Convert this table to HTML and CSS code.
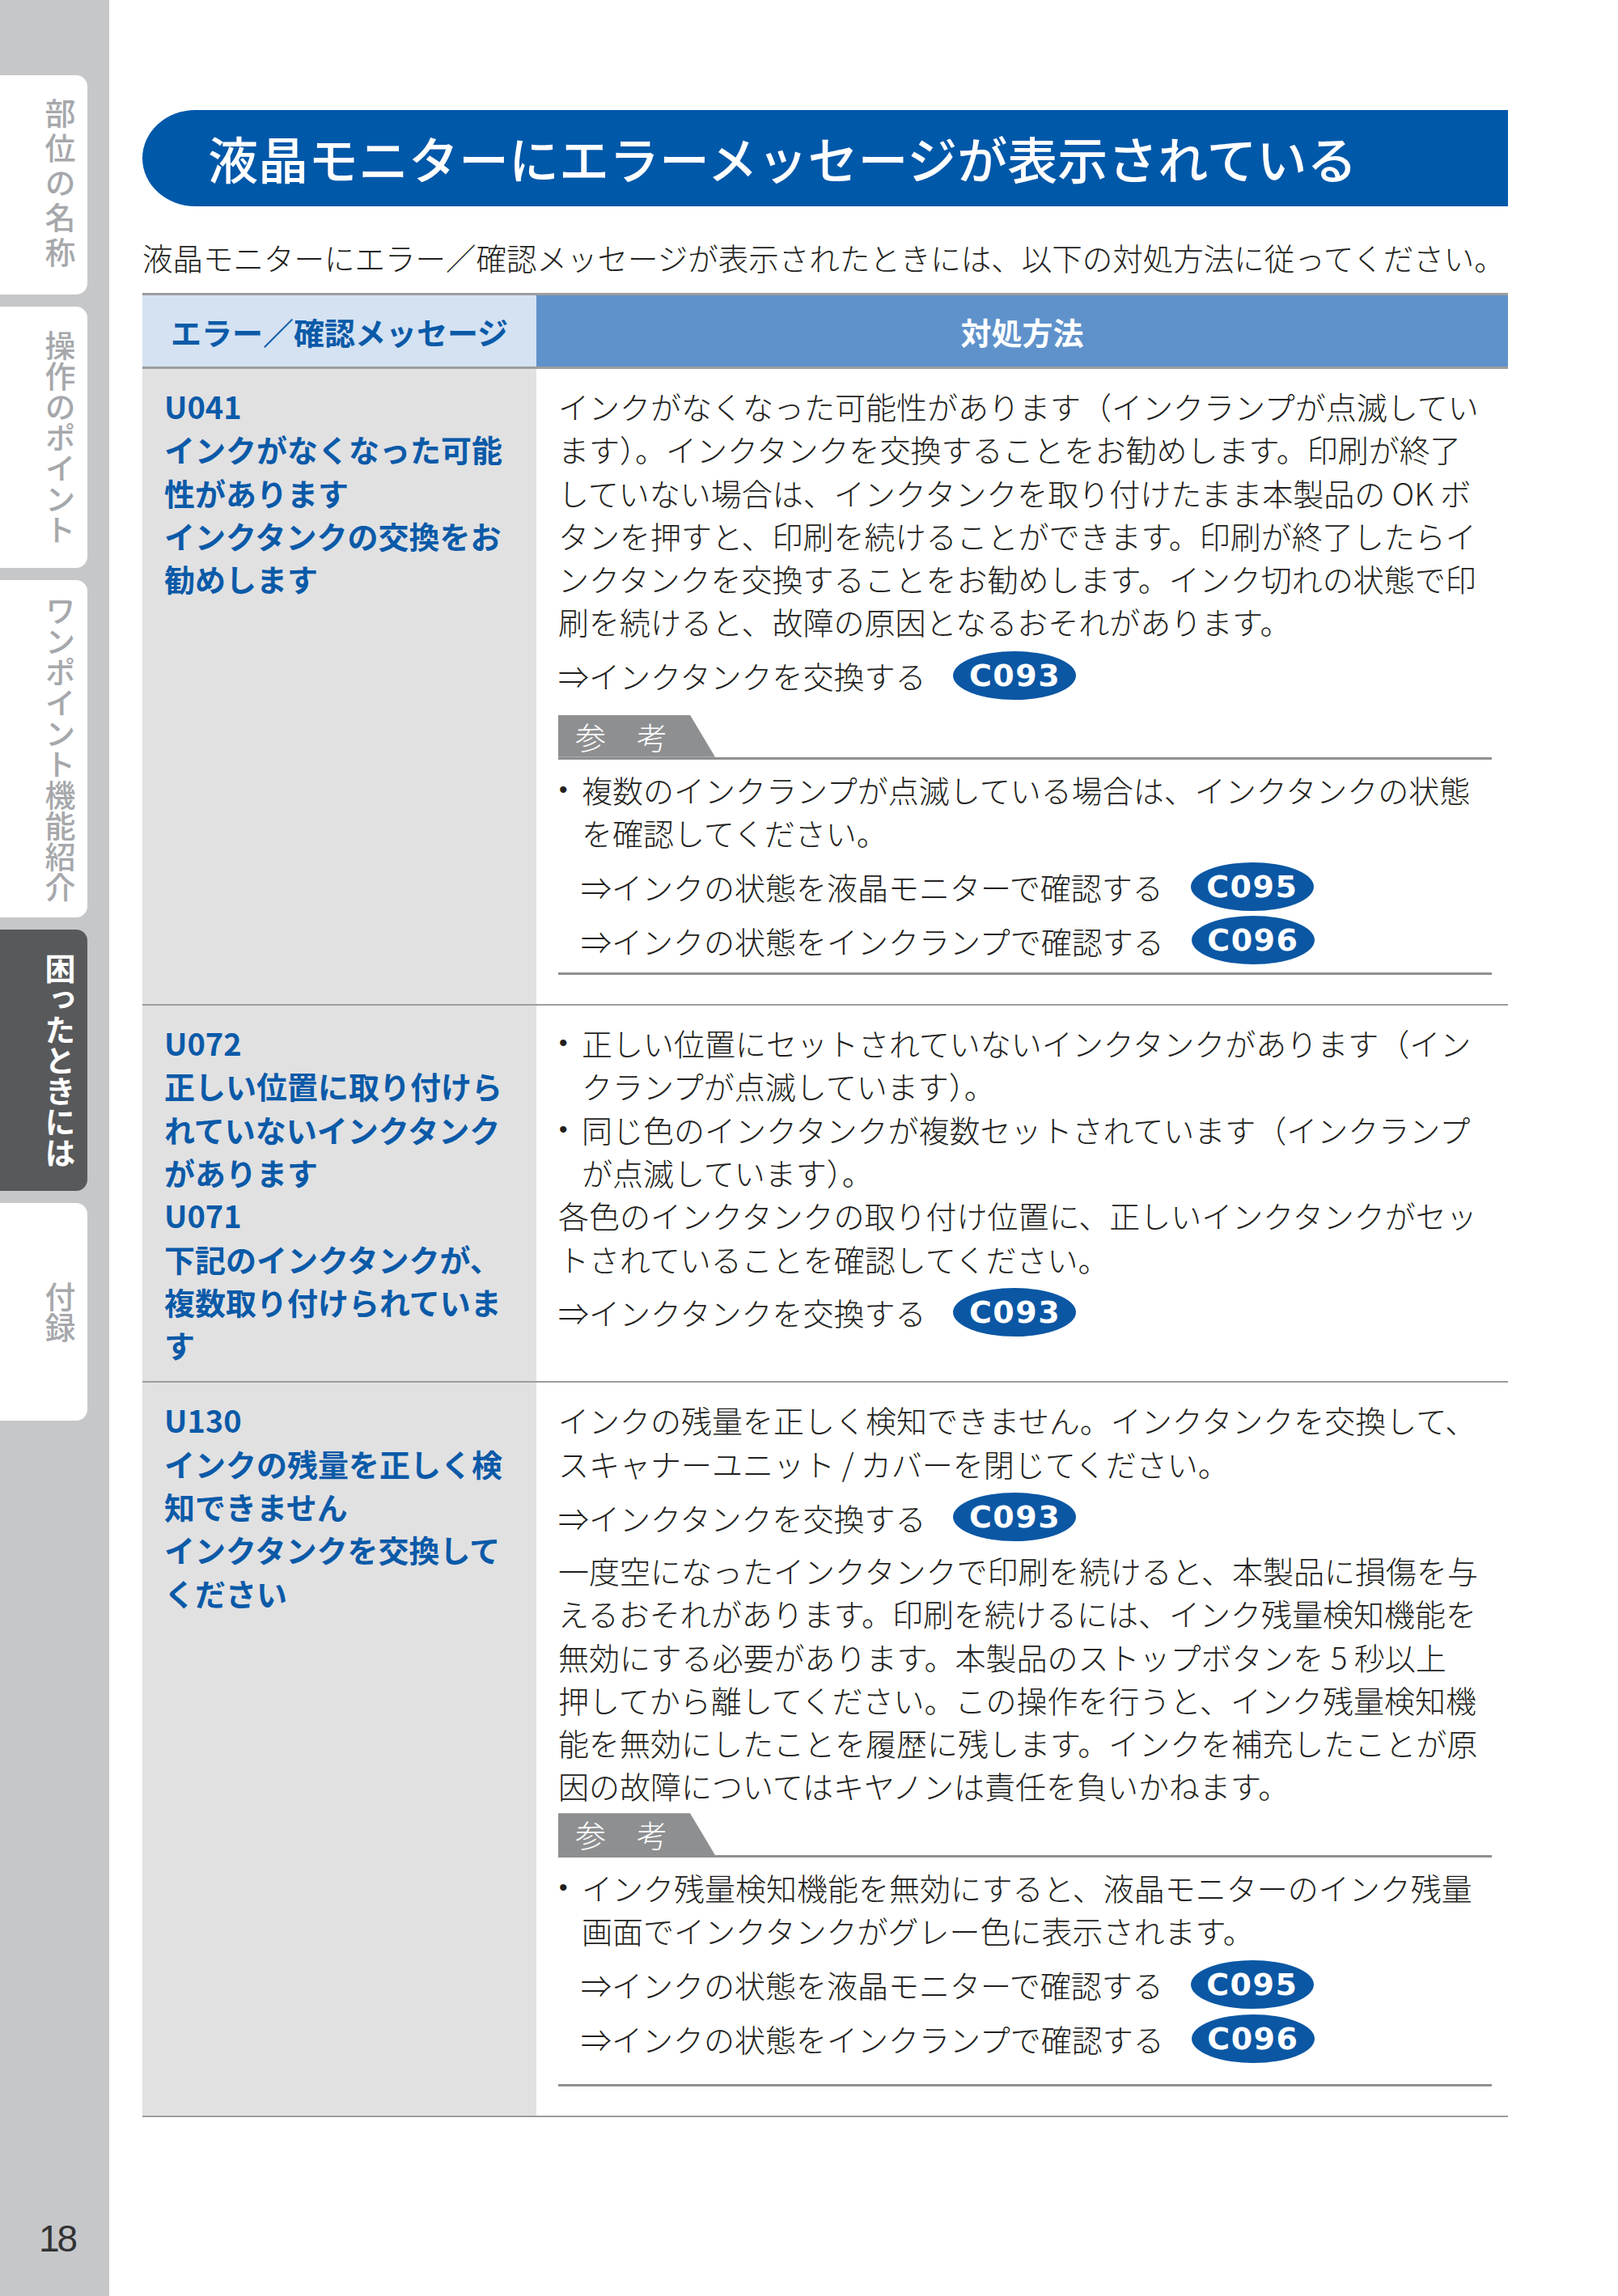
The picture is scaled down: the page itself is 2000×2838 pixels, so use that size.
FILE: index.html
```html
<!DOCTYPE html>
<html lang="ja">
<head>
<meta charset="utf-8">
<title>液晶モニターにエラーメッセージが表示されている</title>
<link rel="stylesheet" href="styles.css">
</head>
<body>
<div class="page">
  <aside class="sidebar">
    <nav class="tabs">
      <div class="tab tab-1"><span>部位の名称</span></div>
      <div class="tab tab-2"><span>操作のポイント</span></div>
      <div class="tab tab-3"><span>ワンポイント機能紹介</span></div>
      <div class="tab tab-4"><span>困ったときには</span></div>
      <div class="tab tab-5"><span>付録</span></div>
    </nav>
    <div class="pageno">18</div>
  </aside>

  <main class="main">
    <h1 class="title">液晶モニターにエラーメッセージが表示されている</h1>
    <p class="lead">液晶モニターにエラー／確認メッセージが表示されたときには、以下の対処方法に従ってください。</p>

    <div class="table">
      <div class="thead">
        <div class="th th-msg">エラー／確認メッセージ</div>
        <div class="th th-act">対処方法</div>
      </div>

      <div class="row">
        <div class="cell msg">U041<br>インクがなくなった可能<br>性があります<br>インクタンクの交換をお<br>勧めします</div>
        <div class="cell act">
          <p class="body">インクがなくなった可能性があります（インクランプが点滅してい<br>ます）。インクタンクを交換することをお勧めします。印刷が終了<br>していない場合は、インクタンクを取り付けたまま本製品の OK ボ<br>タンを押すと、印刷を続けることができます。印刷が終了したらイ<br>ンクタンクを交換することをお勧めします。インク切れの状態で印<br>刷を続けると、故障の原因となるおそれがあります。</p>
          <div class="ref"><span>⇒インクタンクを交換する</span><span class="badge">C093</span></div>
          <div class="note">
            <div class="note-head"><span class="note-label">参　考</span></div>
            <ul class="bullets">
              <li><span>複数のインクランプが点滅している場合は、インクタンクの状態<br>を確認してください。</span></li>
            </ul>
            <div class="ref"><span>⇒インクの状態を液晶モニターで確認する</span><span class="badge">C095</span></div>
            <div class="ref"><span>⇒インクの状態をインクランプで確認する</span><span class="badge">C096</span></div>
          </div>
        </div>
      </div>

      <div class="row">
        <div class="cell msg">U072<br>正しい位置に取り付けら<br>れていないインクタンク<br>があります<br>U071<br>下記のインクタンクが、<br>複数取り付けられていま<br>す</div>
        <div class="cell act">
          <ul class="bullets first">
            <li><span>正しい位置にセットされていないインクタンクがあります（イン<br>クランプが点滅しています）。</span></li>
            <li><span>同じ色のインクタンクが複数セットされています（インクランプ<br>が点滅しています）。</span></li>
          </ul>
          <p class="body">各色のインクタンクの取り付け位置に、正しいインクタンクがセッ<br>トされていることを確認してください。</p>
          <div class="ref"><span>⇒インクタンクを交換する</span><span class="badge">C093</span></div>
        </div>
      </div>

      <div class="row">
        <div class="cell msg">U130<br>インクの残量を正しく検<br>知できません<br>インクタンクを交換して<br>ください</div>
        <div class="cell act">
          <p class="body">インクの残量を正しく検知できません。インクタンクを交換して、<br>スキャナーユニット / カバーを閉じてください。</p>
          <div class="ref"><span>⇒インクタンクを交換する</span><span class="badge">C093</span></div>
          <p class="body">一度空になったインクタンクで印刷を続けると、本製品に損傷を与<br>えるおそれがあります。印刷を続けるには、インク残量検知機能を<br>無効にする必要があります。本製品のストップボタンを 5 秒以上<br>押してから離してください。この操作を行うと、インク残量検知機<br>能を無効にしたことを履歴に残します。インクを補充したことが原<br>因の故障についてはキヤノンは責任を負いかねます。</p>
          <div class="note note-wide">
            <div class="note-head"><span class="note-label">参　考</span></div>
            <ul class="bullets">
              <li><span>インク残量検知機能を無効にすると、液晶モニターのインク残量<br>画面でインクタンクがグレー色に表示されます。</span></li>
            </ul>
            <div class="ref"><span>⇒インクの状態を液晶モニターで確認する</span><span class="badge">C095</span></div>
            <div class="ref"><span>⇒インクの状態をインクランプで確認する</span><span class="badge">C096</span></div>
          </div>
        </div>
      </div>
    </div>
  </main>
</div>
</body>
</html>
```

FILE: styles.css
```css
* {
  box-sizing: border-box;
  margin: 0;
  padding: 0;
}

html, body {
  width: 2000px;
  background: #ffffff;
}

body {
  font-family: "Noto Sans CJK JP", "Noto Sans", sans-serif;
  color: #231f20;
}

.page {
  display: flex;
  width: 2000px;
  min-height: 2838px;
}

/* ---------- sidebar ---------- */
.sidebar {
  width: 135px;
  flex: none;
  background: #c6c7c9;
  display: flex;
  flex-direction: column;
}

.tabs {
  display: flex;
  flex-direction: column;
  gap: 15px;
  padding-top: 93px;
}

.tab {
  width: 108px;
  background: #ffffff;
  border-radius: 0 14px 14px 0;
  display: flex;
  align-items: center;
  justify-content: flex-end;
  padding-right: 15px;
}

.tab span {
  writing-mode: vertical-rl;
  font-size: 38px;
  line-height: 38px;
  color: #a6a8ab;
  font-weight: 500;
}

.tab-1 { height: 271px; }
.tab-1 span { letter-spacing: 5px; }
.tab-2 { height: 323px; }
.tab-3 { height: 417px; }
.tab-4 { height: 323px; background: #58595b; }
.tab-4 span { color: #ffffff; font-weight: 700; }
.tab-5 { height: 269px; }

.pageno {
  margin-top: auto;
  padding: 0 0 48px 48px;
  font-family: "Liberation Sans", Arial, sans-serif;
  font-size: 46px;
  line-height: 46px;
  letter-spacing: -3px;
  color: #333333;
}

/* ---------- main ---------- */
.main {
  width: 1688px;
  margin-left: 41px;
  padding-top: 136px;
}

.title {
  height: 119px;
  background: #0058a9;
  color: #ffffff;
  border-radius: 66px 0 0 66px / 60px 0 0 60px;
  font-size: 62px;
  font-weight: 500;
  line-height: 119px;
  padding-left: 81px;
  white-space: nowrap;
}

.lead {
  margin-top: 36px;
  font-size: 37.5px;
  font-weight: 300;
  line-height: 53px;
  white-space: nowrap;
}

.table {
  margin-top: 18px;
}

.thead {
  display: grid;
  grid-template-columns: 487px 1201px;
  height: 94px;
  border-top: 3px solid #9d9d9d;
  border-bottom: 3px solid #9d9d9d;
}

.th {
  display: flex;
  align-items: center;
  justify-content: center;
  font-size: 38px;
  font-weight: 700;
}

.th-msg { background: #d4e2f2; color: #0b5aa8; }
.th-act { background: #5f92cb; color: #ffffff; }

.row {
  display: grid;
  grid-template-columns: 487px 1201px;
  border-bottom: 2px solid #9d9d9d;
}

.cell {
  padding-top: 19px;
  padding-bottom: 19px;
  font-size: 38px;
  line-height: 53.3px;
}

.msg {
  background: #e1e1e2;
  padding-left: 27px;
  color: #0b5aa8;
  font-weight: 700;
  white-space: nowrap;
}

.act {
  padding-left: 27px;
  padding-right: 20px;
  font-weight: 300;
}

.body {
  white-space: nowrap;
}

.ref {
  display: flex;
  align-items: center;
  height: 53.3px;
  margin-top: 13.6px;
  white-space: nowrap;
}

.ref + .body {
  margin-top: 12px;
}

.badge {
  flex: none;
  width: 152px;
  height: 60px;
  margin-left: 34px;
  border-radius: 50%;
  background: #0b57a4;
  color: #ffffff;
  font-family: "DejaVu Sans", sans-serif;
  font-weight: 700;
  font-size: 38px;
  letter-spacing: 1.5px;
  line-height: 1;
  display: flex;
  align-items: center;
  justify-content: center;
}

/* ---------- 参考 note ---------- */
.note {
  border-bottom: 3px solid #8e8f91;
  padding-bottom: 13px;
  margin-bottom: 17px;
}

.note-wide {
  padding-bottom: 29px;
}

.ref + .note { margin-top: 22px; }
.body + .note { margin-top: 7.5px; }

.note-head {
  display: flex;
  height: 55px;
  border-bottom: 3px solid #8e8f91;
}

.note-label {
  width: 194px;
  height: 52px;
  background: #8e8f91;
  color: #ffffff;
  clip-path: polygon(0 0, 163px 0, 194px 100%, 0 100%);
  padding-left: 21px;
  font-size: 38px;
  line-height: 52px;
}

.note .bullets {
  margin-top: 10px;
}

.note .ref {
  padding-left: 28px;
}

.bullets {
  list-style: none;
}

.bullets li {
  display: flex;
  white-space: nowrap;
}

.bullets li::before {
  content: "•";
  flex: none;
  width: 28px;
  padding-left: 1px;
  font-family: "Liberation Sans", Arial, sans-serif;
  font-size: 30px;
  line-height: 53.3px;
}
```
